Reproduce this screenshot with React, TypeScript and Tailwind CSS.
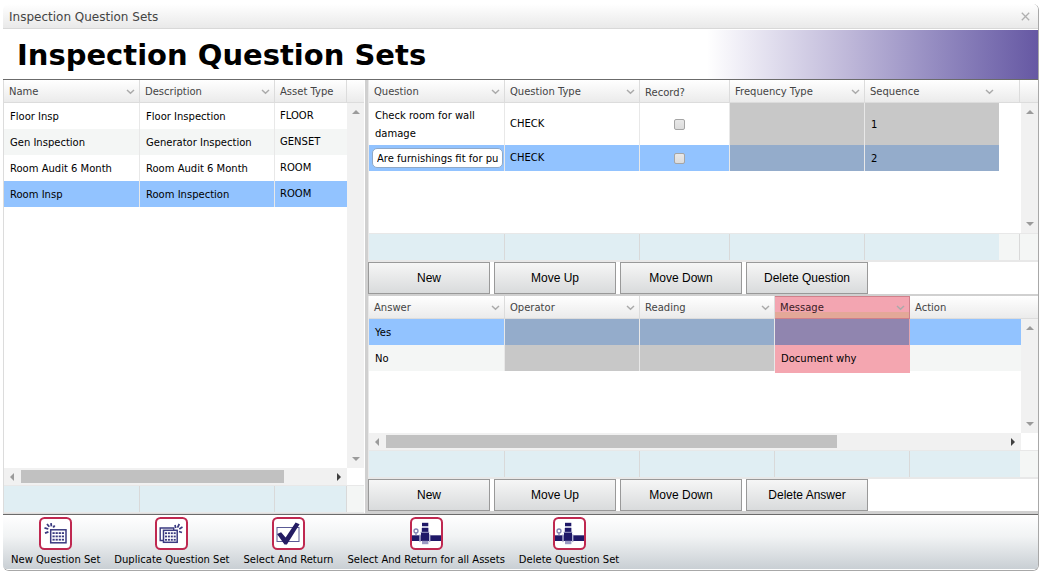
import type { ReactNode } from "react";
import clsx from "clsx";

interface Column {
  label: string;
  width: string;
  sortable?: boolean;
  className?: string;
}

const questionSets = [
  { name: "Floor Insp", description: "Floor Inspection", assetType: "FLOOR" },
  { name: "Gen Inspection", description: "Generator Inspection", assetType: "GENSET" },
  { name: "Room Audit 6 Month", description: "Room Audit 6 Month", assetType: "ROOM" },
  { name: "Room Insp", description: "Room Inspection", assetType: "ROOM" },
];

const setColumns: Column[] = [
  { label: "Name", width: "w-[136px]", sortable: true },
  { label: "Description", width: "w-[135px]", sortable: true },
  { label: "Asset Type", width: "w-[72px]" },
  { label: "", width: "w-auto", className: "border-r-0" },
];

const questionColumns: Column[] = [
  { label: "Question", width: "w-[136px]", sortable: true },
  { label: "Question Type", width: "w-[135px]", sortable: true },
  { label: "Record?", width: "w-[90px]", className: "pt-1" },
  { label: "Frequency Type", width: "w-[135px]", sortable: true },
  { label: "Sequence", width: "w-[134px]", sortable: true },
  { label: "", width: "w-auto" },
  { label: "", width: "w-[18px]", className: "border-r-0" },
];

const answerColumns: Column[] = [
  { label: "Answer", width: "w-[136px]", sortable: true },
  { label: "Operator", width: "w-[135px]", sortable: true },
  { label: "Reading", width: "w-[135px]", sortable: true },
  {
    label: "Message",
    width: "w-[135px]",
    sortable: true,
    className: "border-t border-[#d0808a] bg-linear-to-b from-[#f3a5b1] from-70% to-[#e3a898] to-70% pt-px text-[#3a2025]",
  },
  { label: "Action", width: "w-auto", className: "border-r-0" },
  { label: "", width: "w-[17px]", className: "border-r-0" },
];

const cell = "border-r border-[#e8e8e8] px-1.5 pb-0";
const disabledCell = "bg-[#c8c8c8]";
const disabledSelected = "bg-[#94accb]";

function Chevron() {
  return (
    <svg width="9" height="6" viewBox="0 0 9 6" fill="none" className="shrink-0" aria-hidden="true">
      <path d="M1 1l3.5 3.2L8 1" stroke="#aaa" strokeWidth="1.5" />
    </svg>
  );
}

function Arrow({ dir, dark }: { dir: "up" | "down" | "left" | "right"; dark?: boolean }) {
  const points = {
    up: "4,2 8,6 0,6",
    down: "0,2 8,2 4,6",
    left: "6,0 6,8 2,4",
    right: "2,0 6,4 2,8",
  };
  return (
    <svg width="8" height="8" viewBox="0 0 8 8" aria-hidden="true">
      <polygon points={points[dir]} fill={dark ? "#404040" : "#9b9b9b"} />
    </svg>
  );
}

function VScroll() {
  return (
    <div className="absolute top-[23px] right-0 bottom-0 flex w-[17px] flex-col items-center justify-between bg-[#f1f1f1] py-[5px]">
      <Arrow dir="up" />
      <Arrow dir="down" />
    </div>
  );
}

function HScroll({ thumb }: { thumb: string }) {
  return (
    <div className="mr-[17px] flex h-[17px] shrink-0 items-center bg-[#f1f1f1] px-1">
      <Arrow dir="left" />
      <div className="mx-[5px] flex h-[13px] flex-1">
        <div className={clsx("h-full bg-[#c1c1c1]", thumb)} />
      </div>
      <Arrow dir="right" dark />
    </div>
  );
}

function GridTable({ label, columns, children }: { label: string; columns: Column[]; children: ReactNode }) {
  return (
    <table aria-label={label} className="w-full table-fixed border-separate border-spacing-0 text-left">
      <colgroup>
        {columns.map((c, i) => (
          <col key={i} className={c.width} />
        ))}
      </colgroup>
      <thead>
        <tr className="h-[23px]">
          {columns.map((c, i) =>
            // the sequence header runs on over the empty column beside it
            c.label === "" && i === 5 && columns.length === 7 ? null : (
              <th
                key={i}
                colSpan={c.label === "Sequence" ? 2 : 1}
                className={clsx(
                  "border-r border-b pb-0 pl-[5px] font-normal",
                  c.label === "Message" ? "" : "border-[#dcdcdc] bg-linear-to-b from-white to-[#ebebeb] text-[#444]",
                  c.label === "Message" || c.label === "Record?" ? "" : "pt-0.5",
                  c.label === "Sequence" ? "pr-[25px]" : "pr-1",
                  c.className
                )}
              >
                <div className="flex items-center justify-between">
                  <span className="whitespace-nowrap">{c.label}</span>
                  {c.sortable && <Chevron />}
                </div>
              </th>
            )
          )}
        </tr>
      </thead>
      <tbody>{children}</tbody>
    </table>
  );
}

// Empty summary strip under each grid
function GridFooter({ widths, thick }: { widths: string[]; thick?: boolean }) {
  return (
    <div className={clsx("flex shrink-0 border-t border-[#e8e8e8]", thick ? "h-[29px] border-b-2" : "h-7 border-b")}>
      {widths.map((w, i) => (
        <div key={i} className={clsx("border-r border-[#d9d9d9]", w)} />
      ))}
    </div>
  );
}

function GridButtons({ labels }: { labels: string[] }) {
  return (
    <div className="flex shrink-0 gap-1">
      {labels.map((l) => (
        <button
          key={l}
          className="h-8 w-[122px] border border-[#999] bg-linear-to-b from-[#f6f6f6] to-[#d9dbdc] font-['Liberation_Sans',Arial,sans-serif] text-xs text-black"
        >
          {l}
        </button>
      ))}
    </div>
  );
}

function IconFrame({ children }: { children: ReactNode }) {
  return (
    <svg width="33" height="33" viewBox="0 0 33 33" fill="none" aria-hidden="true">
      <rect x="1" y="1" width="31" height="31" rx="4.5" fill="#fff" stroke="#bf2850" strokeWidth="2" />
      {children}
    </svg>
  );
}

function Dots({ x, y, step }: { x: number; y: number; step: number }) {
  return (
    <g fill="#3a3a80">
      {[0, 1, 2].map((r) =>
        [0, 1, 2, 3].map((c) => (
          <rect key={`${r}${c}`} x={x + c * step} y={y + r * 3.3} width={step - 0.9} height="1.8" />
        ))
      )}
    </g>
  );
}

function NewSetIcon() {
  return (
    <IconFrame>
      <rect x="11.7" y="12.8" width="15.3" height="13" stroke="#3a3a80" strokeWidth="1.5" />
      <Dots x={13.5} y={15.2} step={3.1} />
      <path d="M5.5 10.8l3.8 1.2M6 16.2l3.4-1.4M8 7l2.3 2.8M12 6.2l.4 3.2M14.2 10.6l1.5-2.2" stroke="#3a3a80" strokeWidth="1.8" />
    </IconFrame>
  );
}

function DuplicateSetIcon() {
  return (
    <IconFrame>
      <path d="M8 23.5H5.2V11h13.5v2" stroke="#3a3a80" strokeWidth="1.4" />
      <rect x="8.5" y="13.3" width="13.7" height="12" stroke="#3a3a80" strokeWidth="1.5" />
      <Dots x={10} y={15.3} step={2.9} />
      <path d="M20 8l.7 3M24.3 7l-1.8 3.6M27.5 10l-3.2 2M24 14.5l3 1" stroke="#3a3a80" strokeWidth="1.7" />
    </IconFrame>
  );
}

function CheckIcon() {
  return (
    <IconFrame>
      <rect x="5" y="10.5" width="22" height="14" stroke="#5a5a95" strokeWidth="1" />
      <path d="M5 17l4.1-1.8 4.5 5.2L23.6 5.4l4 1.8L14.9 27.5h-2.4z" fill="#241c63" />
    </IconFrame>
  );
}

function ValveIcon() {
  return (
    <IconFrame>
      <path d="M2 18.3h29V24H2z" fill="#1f1868" />
      <rect x="9.3" y="17.3" width="1.4" height="7.8" fill="#b5b5d3" />
      <rect x="19" y="17.3" width="1.4" height="7.8" fill="#b5b5d3" />
      <circle cx="6" cy="14" r="2" stroke="#8080b2" strokeWidth="1.3" />
      <path d="M6 16.2v2.1" stroke="#8080b2" strokeWidth="1.3" />
      <rect x="12" y="5.8" width="6.3" height="3.2" fill="#1f1868" />
      <path d="M12 10h6.3" stroke="#9b9bc4" strokeWidth="1.2" />
      <rect x="11.8" y="11" width="6.6" height="4" fill="#1f1868" />
      <rect x="11" y="15" width="8" height="8.8" fill="#1f1868" />
      <path d="M10.5 15.3H19.4" stroke="#9b9bc4" strokeWidth="1" />
      <rect x="12" y="23.8" width="6.4" height="3.4" fill="#9b9bc4" />
    </IconFrame>
  );
}

const actions = [
  { label: "New Question Set", icon: <NewSetIcon /> },
  { label: "Duplicate Question Set", icon: <DuplicateSetIcon /> },
  { label: "Select And Return", icon: <CheckIcon /> },
  { label: "Select And Return for all Assets", icon: <ValveIcon /> },
  { label: "Delete Question Set", icon: <ValveIcon /> },
];

function RecordBox({ label }: { label: string }) {
  return (
    <input
      type="checkbox"
      aria-label={label}
      className="mx-auto block size-[11px] appearance-none rounded-xs border border-[#a5a5a5] bg-linear-to-b from-[#e8e8e8] to-[#dcdcdc]"
    />
  );
}

export default function App() {
  return (
    <div className="flex min-h-screen flex-col bg-white pt-1 pr-[5px] pb-0.5 pl-[3px] font-['DejaVu_Sans',Verdana,sans-serif] text-[10px] leading-[18px] text-black">
      <div className="flex flex-1 flex-col overflow-hidden rounded-md border-r border-b border-[#a8a8a8]">
        <div className="flex h-[25px] shrink-0 items-center justify-between border-b border-[#d8d8d8] bg-linear-to-b from-white to-[#e9e9e9] pt-px pr-2 pl-1.5">
          <span className="text-xs text-[#444]">Inspection Question Sets</span>
          <button aria-label="Close">
            <svg width="9" height="9" viewBox="0 0 9 9" stroke="#b0b0b0" strokeWidth="1.3" aria-hidden="true">
              <path d="M.8.8l7.4 7.4M8.2.8L.8 8.2" />
            </svg>
          </button>
        </div>

        <div className="flex h-[51px] shrink-0 items-center border-t border-b border-t-white border-b-[#6b6b6b] bg-linear-to-r from-white from-68% via-[#bdb6d8] via-82% to-[#6658a3] pl-3.5">
          <h1 className="text-[29px] leading-9 font-bold">Inspection Question Sets</h1>
        </div>

        <div className="flex flex-1">
          {/* Question sets */}
          <section className="flex w-[362px] shrink-0 flex-col border-b border-l border-[#dcdcdc] pr-px">
            <div className="relative flex-1">
              <GridTable label="Question sets" columns={setColumns}>
                {questionSets.map((s, i) => (
                  <tr
                    key={s.name}
                    className={clsx("h-[26px]", i === 3 ? "bg-[#92c3ff]" : i % 2 === 1 ? "bg-[#f4f6f5]" : "bg-white")}
                  >
                    <td className={clsx(cell, "pt-0.5")}>{s.name}</td>
                    <td className={clsx(cell, "pt-0.5")}>{s.description}</td>
                    <td className="px-[5px] py-0">{s.assetType}</td>
                    <td />
                  </tr>
                ))}
              </GridTable>
              <VScroll />
            </div>
            <HScroll thumb="w-[85%]" />
            <div className="bg-[#e0eef3]">
              <GridFooter widths={["w-[136px]", "w-[135px]", "w-[72px]", "flex-1 border-r-0 bg-[#f4f6f5]"]} />
            </div>
          </section>

          <div className="flex min-w-0 flex-1 flex-col border-b-3 border-l-3 border-[#d0d0d0]">
            {/* Questions of the selected set */}
            <section className="shrink-0 border-b-2 border-[#d0d0d0]">
              <div className="relative min-h-[153px] border-l border-[#e8e8e8]">
                <GridTable label="Questions" columns={questionColumns}>
                  <tr className="h-[42px]">
                    <td className={clsx(cell, "pt-0.5")}>Check room for wall damage</td>
                    <td className="border-r border-[#e8e8e8] px-[5px] py-0">CHECK</td>
                    <td className="border-r border-[#e8e8e8] py-0 pr-2.5 pl-0">
                      <RecordBox label="Record question 1" />
                    </td>
                    <td className={clsx(cell, disabledCell)} />
                    <td className={clsx("px-1.5 pt-0.5 pb-0", disabledCell)}>1</td>
                    <td />
                    <td />
                  </tr>
                  <tr className="h-[26px] bg-[#92c3ff]">
                    <td className="border-r border-[#e8e8e8] py-0 pr-px pl-[3px]">
                      <input
                        aria-label="Question text"
                        defaultValue="Are furnishings fit for pu"
                        className="block h-5 w-full rounded-[5px] border border-[#8fa9c8] bg-white px-1 text-[10px] outline-none"
                      />
                    </td>
                    <td className="border-r border-[#e8e8e8] px-[5px] py-0">CHECK</td>
                    <td className="border-r border-[#e8e8e8] py-0 pr-2.5 pl-0">
                      <RecordBox label="Record question 2" />
                    </td>
                    <td className={clsx(cell, disabledSelected)} />
                    <td className={clsx("px-1.5 pt-0.5 pb-0", disabledSelected)}>2</td>
                    <td className="bg-white" />
                    <td className="bg-white" />
                  </tr>
                </GridTable>
                <VScroll />
              </div>
              <div className="border-l border-[#e8e8e8] bg-[#e0eef3]">
                <GridFooter
                  thick
                  widths={[
                    "w-[136px]",
                    "w-[135px]",
                    "w-[90px]",
                    "w-[135px]",
                    "w-[134px] border-r-0",
                    "flex-1 bg-[#f4f6f5]",
                    "w-[18px] border-r-0 bg-[#f4f6f5]",
                  ]}
                />
              </div>
              <GridButtons labels={["New", "Move Up", "Move Down", "Delete Question"]} />
            </section>

            {/* Answers of the selected question */}
            <section className="flex flex-1 flex-col">
              <div className="flex flex-1 flex-col border-l border-[#e8e8e8]">
                <div className="relative flex-1">
                  <GridTable label="Answers" columns={answerColumns}>
                    <tr className="h-[26px] bg-[#92c3ff]">
                      <td className={clsx(cell, "pt-0.5")}>Yes</td>
                      <td className={clsx(cell, disabledSelected)} />
                      <td className={clsx(cell, disabledSelected)} />
                      <td className="border-r border-[#e0a5b0] bg-[#9085af]" />
                      <td />
                      <td />
                    </tr>
                    <tr className="h-[26px] bg-[#f4f6f5]">
                      <td className={clsx(cell, "pt-0.5")}>No</td>
                      <td className={clsx(cell, disabledCell)} />
                      <td className={clsx(cell, disabledCell)} />
                      <td className="bg-[#f4a6b0] px-1.5 pt-0.5 pb-0">Document why</td>
                      <td />
                      <td />
                    </tr>
                    <tr className="h-0.5" aria-hidden="true">
                      <td colSpan={3} className="p-0" />
                      <td className="bg-[#f4a6b0] p-0" />
                      <td colSpan={2} className="p-0" />
                    </tr>
                  </GridTable>
                  <VScroll />
                </div>
                <HScroll thumb="w-[73%]" />
                <div className="bg-[#e0eef3]">
                  <GridFooter
                    thick
                    widths={[
                      "w-[136px]",
                      "w-[135px]",
                      "w-[135px]",
                      "w-[135px]",
                      "flex-1 border-r-0",
                      "w-[18px] border-r-0 bg-[#f4f6f5]",
                    ]}
                  />
                </div>
              </div>
              <GridButtons labels={["New", "Move Up", "Move Down", "Delete Answer"]} />
            </section>
          </div>
        </div>

        <div className="flex h-14 shrink-0 items-start gap-3.5 border-t border-b border-t-[#6b6b6b] border-b-white bg-linear-to-b from-white via-[#f1f3f4] via-40% to-[#c9cfd4] pt-0.5 pl-2">
          {actions.map((a) => (
            <button key={a.label} className="flex flex-col items-center gap-px">
              {a.icon}
              <span className="whitespace-nowrap">{a.label}</span>
            </button>
          ))}
        </div>
      </div>
    </div>
  );
}
